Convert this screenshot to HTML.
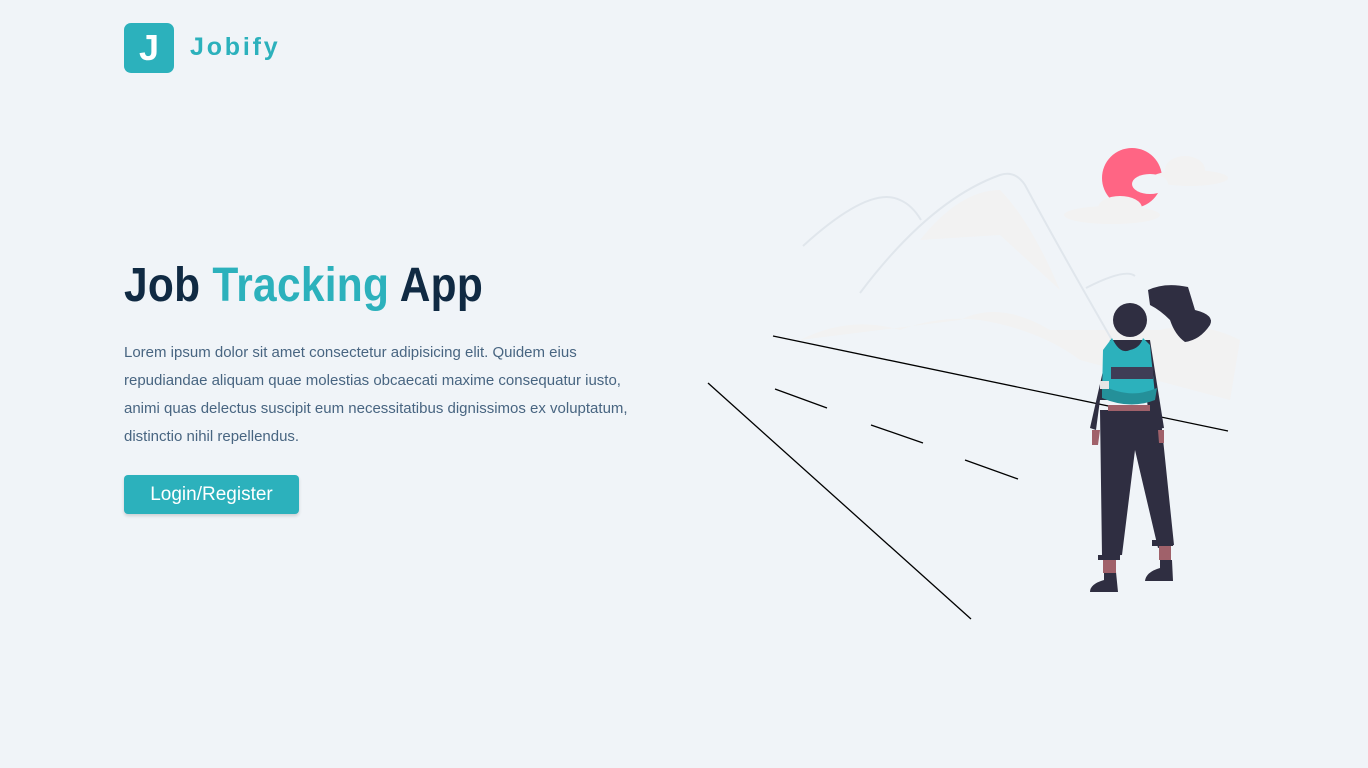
<!DOCTYPE html>
<html><head><meta charset="utf-8"><style>
body{margin:0;background:#f0f4f8;width:1368px;height:768px;overflow:hidden;font-family:"Liberation Sans",sans-serif;position:relative}
.logo{position:absolute;left:124px;top:23px;width:50px;height:50px;background:#2cb1bc;border-radius:7px;color:#fff;font-weight:bold;font-size:36px;text-align:center;line-height:50px}
.brand{position:absolute;left:190px;top:33px;color:#2cb1bc;font-weight:bold;font-size:25px;letter-spacing:2.8px}
h1{position:absolute;left:124px;top:258px;margin:0;font-size:48px;font-weight:bold;color:#102a43;transform:scaleX(0.885);transform-origin:0 0;white-space:nowrap;letter-spacing:0.3px}
h1 span{color:#2cb1bc}
p{position:absolute;left:124px;top:339px;margin:0;width:515px;font-size:15px;line-height:28px;color:#486581}
.btn{position:absolute;left:124px;top:475px;width:175px;height:39px;background:#2cb1bc;color:#fff;border-radius:4px;font-size:19px;text-align:center;line-height:39px;box-shadow:0 2px 3px rgba(0,0,0,.15)}
svg{position:absolute;left:0;top:0}
</style></head><body>
<div class="logo">J</div><div class="brand">Jobify</div>
<h1>Job <span>Tracking</span> App</h1>
<p>Lorem ipsum dolor sit amet consectetur adipisicing elit. Quidem eius repudiandae aliquam quae molestias obcaecati maxime consequatur iusto, animi quas delectus suscipit eum necessitatibus dignissimos ex voluptatum, distinctio nihil repellendus.</p>
<div class="btn">Login/Register</div>
<svg width="1368" height="768">
<g fill="#f2f2f2">
<path d="M800 340 Q850 315 900 330 Q940 315 980 320 Q1040 330 1080 360 L1230 400 L1240 340 Q1200 320 1160 330 L1050 330 Q1000 300 960 320 Z"/>
<path d="M920 240 Q960 190 1000 190 Q1030 220 1060 290 L1000 235 Z"/>
</g>
<circle cx="1132" cy="178" r="30" fill="#ff6584"/>
<ellipse cx="1190" cy="178" rx="38" ry="8" fill="#f2f2f2"/>
<ellipse cx="1185" cy="170" rx="20" ry="14" fill="#f2f2f2"/>
<ellipse cx="1150" cy="184" rx="18" ry="10" fill="#f0f4f8"/>
<ellipse cx="1112" cy="215" rx="48" ry="9" fill="#f2f2f2"/>
<ellipse cx="1120" cy="208" rx="22" ry="12" fill="#f2f2f2"/>
<g fill="none" stroke="#e0e6ec" stroke-width="2">
<path d="M803 246 Q870 185 900 200 Q912 205 921 220"/>
<path d="M860 293 Q930 200 1000 175 Q1015 170 1025 185 Q1060 250 1112 340"/>
<path d="M1086 288 Q1125 268 1135 276"/>
</g>
<g stroke="#000" stroke-width="1.3">
<line x1="773" y1="336" x2="1228" y2="431"/>
<line x1="708" y1="383" x2="971" y2="619"/>
<line x1="775" y1="389" x2="827" y2="408"/>
<line x1="871" y1="425" x2="923" y2="443"/>
<line x1="965" y1="460" x2="1018" y2="479"/>
</g>
<g fill="#2f2e41">
<path d="M1148 290 Q1165 282 1188 287 Q1192 300 1195 310 Q1215 315 1210 325 Q1200 340 1185 342 Q1175 335 1170 320 Q1160 310 1150 305 Z"/>
<circle cx="1130" cy="320" r="17"/>
<path d="M1110 340 L1150 340 L1164 428 L1150 430 L1147 400 L1100 400 L1096 430 L1090 428 Z"/>
<path d="M1100 410 L1160 410 L1174 545 L1158 548 L1135 450 L1122 555 L1102 556 Z"/>
<path d="M1098 555 h22 v5 h-22z M1152 540 h21 v6 h-21z"/>
<path d="M1104 572 L1116 572 L1118 592 L1090 592 Q1090 584 1104 580 Z"/>
<path d="M1160 560 L1172 560 L1173 581 L1145 581 Q1146 572 1160 568 Z"/>
</g>
<g fill="#a0616a">
<rect x="1103" y="560" width="13" height="13"/><rect x="1159" y="546" width="12" height="14"/>
<path d="M1092 430 h8 l-2 15 h-6z M1158 430 h6 v13 h-5z"/>
<rect x="1108" y="405" width="42" height="6"/>
</g>
<path d="M1112 338 Q1120 355 1130 350 Q1140 348 1143 338 L1150 345 L1155 395 Q1130 410 1102 395 L1103 350 Z" fill="#2cb1bc"/>
<path d="M1102 385 Q1130 400 1157 388 L1155 400 Q1130 410 1102 398 Z" fill="#249099"/>
<rect x="1111" y="367" width="42" height="12" fill="#3f3d56"/>
<rect x="1100" y="381" width="9" height="8" fill="#e6e6e6"/>
</svg>
</body></html>
